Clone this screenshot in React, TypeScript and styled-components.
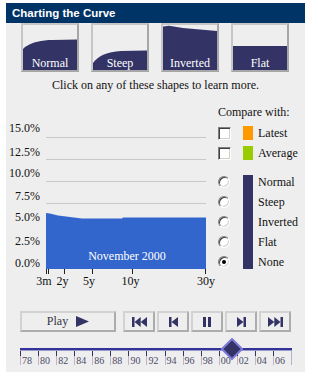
import { Fragment } from "react";
import styled, { createGlobalStyle } from "styled-components";

const GlobalStyle = createGlobalStyle`
  body {
    margin: 0;
    background: #ffffff;
    font-family: "Liberation Serif", "Times New Roman", serif;
  }
`;

const NAVY = "#333366";

const Panel = styled.div`
  width: 299px;
  margin: 3px 0 0 6px;
  padding-bottom: 7px;
  background: #eeeeee;
  display: flex;
  flex-direction: column;
  font-size: 12px;
  color: #111;
`;

const TitleBar = styled.div`
  height: 20px;
  line-height: 20px;
  padding-left: 6px;
  background: #003366;
  color: #ffffff;
  font-family: "Liberation Sans", Arial, sans-serif;
  font-weight: bold;
  font-size: 11.5px;
`;

const ThumbRow = styled.div`
  display: flex;
  gap: 12px;
  padding-left: 15px;
`;

const Thumb = styled.div`
  position: relative;
  width: 58px;
  height: 49px;
  box-sizing: border-box;
  border: 2px solid;
  border-color: #c6c6c6 #a6a6a6 #a6a6a6 #c6c6c6;
  background: #eeeeee;
  display: flex;
  align-items: flex-end;
  justify-content: center;
  cursor: pointer;

  svg {
    position: absolute;
    inset: 0;
  }
`;

const ThumbLabel = styled.span`
  position: relative;
  color: #ffffff;
  line-height: 14px;
`;

const Caption = styled.div`
  margin-top: 6px;
  line-height: 14px;
  text-align: center;
`;

const MainRow = styled.div`
  display: flex;
  margin-top: 13px;
  height: 185px;
`;

const ChartSvg = styled.svg`
  overflow: visible;
  flex: none;
  font-family: "Liberation Serif", "Times New Roman", serif;
  font-size: 12px;
`;

const Legend = styled.div`
  margin-left: 6px;
  display: flex;
  flex-direction: column;
`;

const LegendHeading = styled.div`
  line-height: 14px;
`;

const LegendGrid = styled.div<{ $top: number }>`
  margin-top: ${({ $top }) => $top}px;
  display: grid;
  grid-template-columns: 20px 10px auto;
  column-gap: 5px;
  grid-auto-rows: 20px;
  align-items: center;
`;

const Checkbox = styled.span`
  grid-column: 1;
  width: 13px;
  height: 13px;
  box-sizing: border-box;
  background: #ffffff;
  border: 1px solid;
  border-color: #808080 #ffffff #ffffff #808080;
  box-shadow: inset 1px 1px 0 #404040, inset -1px -1px 0 #d4d0c8;
`;

const Radio = styled.span<{ $checked?: boolean }>`
  grid-column: 1;
  width: 12px;
  height: 12px;
  box-sizing: border-box;
  border-radius: 50%;
  background: #ffffff;
  border: 1px solid;
  border-color: #808080 #ffffff #ffffff #808080;
  box-shadow: inset 1px 1px 0 #404040, inset -1px -1px 0 #d4d0c8;
  display: flex;
  align-items: center;
  justify-content: center;

  &::after {
    content: "";
    width: 4px;
    height: 4px;
    border-radius: 50%;
    background: ${({ $checked }) => ($checked ? "#000" : "transparent")};
  }
`;

const Swatch = styled.span<{ $color: string }>`
  grid-column: 2;
  height: 14px;
  background: ${({ $color }) => $color};
`;

const ShapeBar = styled.span`
  grid-column: 2;
  grid-row: 1 / span 5;
  align-self: stretch;
  margin: 3px 0;
  background: ${NAVY};
`;

const LegendLabel = styled.span`
  grid-column: 3;
  white-space: nowrap;
`;

const ControlRow = styled.div`
  display: flex;
  margin: 21px 0 0 14px;
  height: 21px;
`;

const CtrlButton = styled.button<{ $w: number }>`
  width: ${({ $w }) => $w}px;
  height: 21px;
  box-sizing: border-box;
  padding: 0;
  margin: 0;
  border: 2px solid;
  border-color: #d2d2d2 #acacac #acacac #d2d2d2;
  background: #eeeeee;
  display: flex;
  align-items: center;
  justify-content: center;
  gap: 8px;
  font-family: "Liberation Serif", "Times New Roman", serif;
  font-size: 12px;
  color: #333344;
  cursor: pointer;
`;

const StepGroup = styled.div`
  display: flex;
  gap: 2px;
  margin-left: 7px;
`;

const Scale = styled.div`
  position: relative;
  margin: 6px 0 0 14px;
  width: 272px;
  height: 27px;
  overflow: hidden;
`;

const Track = styled.div`
  margin-top: 10px;
  height: 2px;
  background: #333399;
  border-bottom: 1px solid #9999cc;
`;

const TickRow = styled.div`
  display: flex;
  height: 14px;
  border-right: 1px solid #b4b4c8;
`;

const TickCell = styled.div`
  position: relative;
  flex: 1;
  border-left: 1px solid #b8b8cc;
  padding: 5px 0 0 1px;
  font-size: 10px;
  line-height: 9px;
  color: #4a4a66;

  &::before {
    content: "";
    position: absolute;
    left: -1px;
    top: 0;
    width: 1px;
    height: 5px;
    background: ${NAVY};
  }
`;

const ThumbKnob = styled.svg`
  position: absolute;
  top: 0;
`;

const thumbs = [
  { name: "Normal", d: "M0 24 L2 22 C10 17 18 15 30 15 L54 14.5 V45 H0 Z" },
  { name: "Steep", d: "M0 40 L0 38 C6 30 14 27 28 26 L54 25.5 V45 H0 Z" },
  { name: "Inverted", d: "M0 1.5 L6 0.8 L20 3 L54 6 V45 H0 Z" },
  { name: "Flat", d: "M0 21 L54 21 V45 H0 Z" },
];

const yLabels = [
  { t: "15.0%", y: 132 },
  { t: "12.5%", y: 156 },
  { t: "10.0%", y: 177 },
  { t: "7.5%", y: 200 },
  { t: "5.0%", y: 221 },
  { t: "2.5%", y: 245 },
  { t: "0.0%", y: 267 },
];

const xTicks = [46.5, 48.5, 64.5, 92.5, 132.5, 205.5];
const xLabels = [
  { t: "3m", x: 44 },
  { t: "2y", x: 62.5 },
  { t: "5y", x: 89 },
  { t: "10y", x: 130.5 },
  { t: "30y", x: 206 },
];

const years = ["78", "80", "82", "84", "86", "88", "90", "92", "94", "96", "98", "00", "02", "04", "06"];

// position of the slider knob, in tick cells from 1978
const knobCell = 11.7;

function Icon({ kind }: { kind: string }) {
  if (kind === "first")
    return (
      <svg width="15" height="10" viewBox="0 0 15 10">
        <rect x="0" y="0" width="2.5" height="10" fill={NAVY} />
        <polygon points="2.5,5 8.7,0 8.7,10" fill={NAVY} />
        <polygon points="8.7,5 15,0 15,10" fill={NAVY} />
      </svg>
    );
  if (kind === "prev")
    return (
      <svg width="9" height="10" viewBox="0 0 9 10">
        <rect x="0" y="0" width="2.5" height="10" fill={NAVY} />
        <polygon points="2.5,5 9,0 9,10" fill={NAVY} />
      </svg>
    );
  if (kind === "pause")
    return (
      <svg width="8" height="10" viewBox="0 0 8 10">
        <rect x="0" y="0" width="3" height="10" fill={NAVY} />
        <rect x="5" y="0" width="3" height="10" fill={NAVY} />
      </svg>
    );
  if (kind === "next")
    return (
      <svg width="9" height="10" viewBox="0 0 9 10">
        <polygon points="0,0 6.5,5 0,10" fill={NAVY} />
        <rect x="6.5" y="0" width="2.5" height="10" fill={NAVY} />
      </svg>
    );
  return (
    <svg width="15" height="10" viewBox="0 0 15 10">
      <polygon points="0,0 6.3,5 0,10" fill={NAVY} />
      <polygon points="6.3,0 12.5,5 6.3,10" fill={NAVY} />
      <rect x="12.5" y="0" width="2.5" height="10" fill={NAVY} />
    </svg>
  );
}

export default function App() {
  const cellW = 272 / years.length;
  return (
    <>
      <GlobalStyle />
      <Panel>
        <TitleBar>Charting the Curve</TitleBar>

        {/* Shape thumbnails */}
        <ThumbRow>
          {thumbs.map((t) => (
            <Thumb key={t.name}>
              <svg width="54" height="45" viewBox="0 0 54 45">
                <path d={t.d} fill={NAVY} />
              </svg>
              <ThumbLabel>{t.name}</ThumbLabel>
            </Thumb>
          ))}
        </ThumbRow>
        <Caption>Click on any of these shapes to learn more.</Caption>

        <MainRow>
          {/* Chart, drawn in page coordinates */}
          <ChartSvg width="206" height="185" viewBox="6 105 206 185">
            {yLabels.map((l) => (
              <text key={l.t} x="40" y={l.y} textAnchor="end" fill="#111">
                {l.t}
              </text>
            ))}
            {[0, 1, 2, 3, 4, 5].map((i) => (
              <line key={i} x1="46" x2="206" y1={137.5 + i * 22} y2={137.5 + i * 22} stroke="#c8c8c8" />
            ))}
            <polygon
              points="46,213 50,213.5 54,214.5 58,215.5 62,216 66,216.5 74,217.5 82,218.5 122,218.5 123,217.5 206,217.5 206,269 46,269"
              fill="#3366cc"
            />
            <text x="127" y="259.5" textAnchor="middle" fill="#ffffff">
              November 2000
            </text>
            {xTicks.map((x) => (
              <line key={x} x1={x} x2={x} y1="269" y2="274" stroke="#222" />
            ))}
            {xLabels.map((l) => (
              <text key={l.t} x={l.x} y="285" textAnchor="middle" fill="#111">
                {l.t}
              </text>
            ))}
          </ChartSvg>

          {/* Legend */}
          <Legend>
            <LegendHeading>Compare with:</LegendHeading>
            <LegendGrid $top={4}>
              <Checkbox />
              <Swatch $color="#ff9900" />
              <LegendLabel>Latest</LegendLabel>
              <Checkbox />
              <Swatch $color="#99cc00" />
              <LegendLabel>Average</LegendLabel>
            </LegendGrid>
            <LegendGrid $top={9}>
              <ShapeBar />
              {["Normal", "Steep", "Inverted", "Flat", "None"].map((n) => (
                <Fragment key={n}>
                  <Radio $checked={n === "None"} />
                  <LegendLabel>{n}</LegendLabel>
                </Fragment>
              ))}
            </LegendGrid>
          </Legend>
        </MainRow>

        {/* Playback controls */}
        <ControlRow>
          <CtrlButton $w={96}>
            Play
            <svg width="13" height="11" viewBox="0 0 13 11">
              <polygon points="0,0 13,5.5 0,11" fill={NAVY} />
            </svg>
          </CtrlButton>
          <StepGroup>
            {["first", "prev", "pause", "next", "last"].map((k) => (
              <CtrlButton key={k} $w={32}>
                <Icon kind={k} />
              </CtrlButton>
            ))}
          </StepGroup>
        </ControlRow>

        {/* Date slider */}
        <Scale>
          <Track />
          <TickRow>
            {years.map((y) => (
              <TickCell key={y}>{y}</TickCell>
            ))}
          </TickRow>
          <ThumbKnob
            width="22"
            height="22"
            viewBox="0 0 22 22"
            style={{ left: knobCell * cellW - 11 }}
          >
            <polygon points="11,1 21,11 11,21 1,11" fill={NAVY} stroke="#7a7ad8" strokeWidth="2" />
          </ThumbKnob>
        </Scale>
      </Panel>
    </>
  );
}
